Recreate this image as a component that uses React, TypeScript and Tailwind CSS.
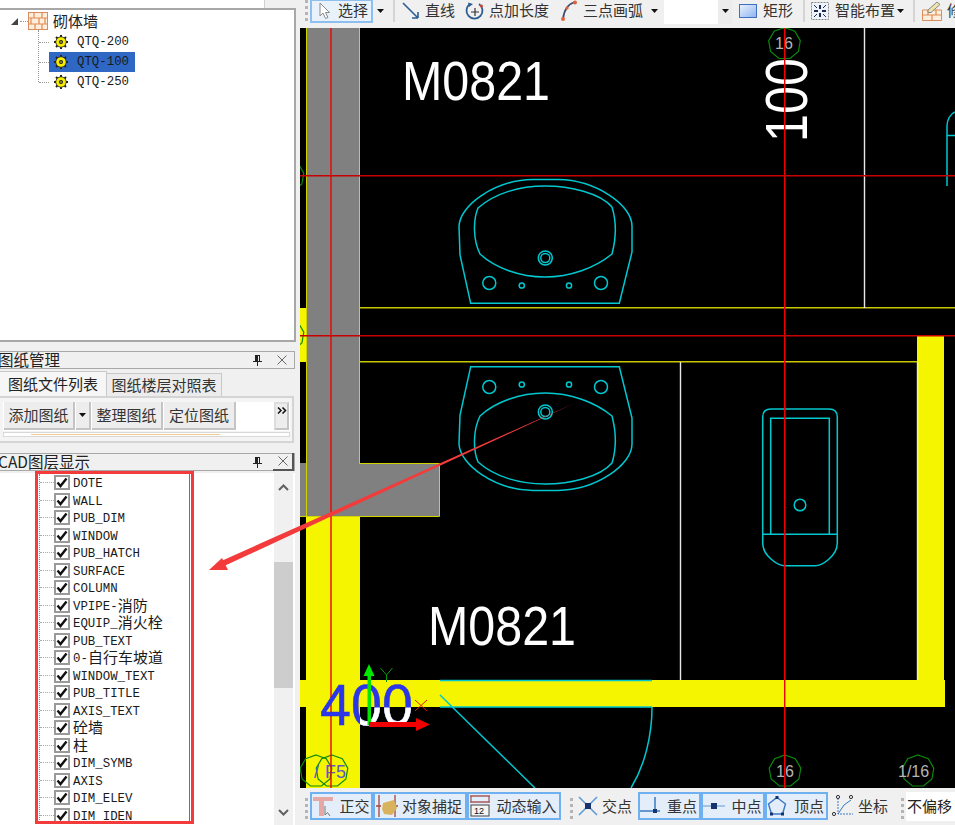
import React from "react";

const LAYERS = [
  "DOTE", "WALL", "PUB_DIM", "WINDOW", "PUB_HATCH", "SURFACE", "COLUMN", "VPIPE-消防", "EQUIP_消火栓", "PUB_TEXT",
  "0-自行车坡道", "WINDOW_TEXT", "PUB_TITLE", "AXIS_TEXT", "砼墙", "柱", "DIM_SYMB", "AXIS", "DIM_ELEV", "DIM_IDEN",
];

const Caret = ({ className = "" }: { className?: string }) => (
  <svg width="7" height="4" viewBox="0 0 7 4" className={`shrink-0 ${className}`}>
    <path d="M0 0h7L3.5 4z" fill="#111" />
  </svg>
);

const Grip = () => (
  <div className="flex w-[4px] shrink-0 flex-col gap-[3px]">
    <span className="h-[3px] w-[3px] bg-[#b5b5b5]" />
    <span className="h-[3px] w-[3px] bg-[#b5b5b5]" />
    <span className="h-[3px] w-[3px] bg-[#b5b5b5]" />
    <span className="h-[3px] w-[3px] bg-[#b5b5b5]" />
  </div>
);

const Sep = () => <div className="h-[22px] w-[2px] shrink-0 bg-[#d4d4d4]" />;

const Gear = () => (
  <svg width="14" height="14" viewBox="0 0 14 14" className="shrink-0">
    <g stroke="#222" strokeWidth="2">
      <path d="M7 0v14M0 7h14M2 2l10 10M12 2L2 12" />
    </g>
    <circle cx="7" cy="7" r="5.2" fill="#f4ec00" stroke="#222" strokeWidth="0.8" />
    <path d="M7 2.5v9M2.5 7h9M3.8 3.8l6.4 6.4M10.2 3.8l-6.4 6.4" stroke="#f4ec00" strokeWidth="1.2" />
    <circle cx="7" cy="7" r="2" fill="#222" />
    <circle cx="7" cy="7" r="0.8" fill="#f4ec00" />
  </svg>
);

const Brick = ({ size = 20 }: { size?: number }) => (
  <svg width={size} height={size} viewBox="0 0 20 18" className="shrink-0">
    <rect x="0.5" y="0.5" width="19" height="17" fill="#fdeedd" stroke="#d98c5f" />
    <path d="M0 6h20M0 12h20M6 0v6M14 0v6M3 6v6M11 6v6M17 6v6M7 12v6M14 12v6" stroke="#e08a50" strokeWidth="1.2" />
  </svg>
);

const Check = () => (
  <span className="flex h-[15px] w-[16px] shrink-0 items-center justify-center border-2 border-[#9a9a9a] bg-white">
    <svg width="12" height="11" viewBox="0 0 12 11">
      <path d="M1.5 5.5L4.5 9L10.5 1.5" fill="none" stroke="#111" strokeWidth="2.4" />
    </svg>
  </span>
);

// the 15px cjk strut keeps latin-only and mixed rows on the same baseline
const Label = ({ text }: { text: string }) => (
  <span className="block whitespace-nowrap text-[15px] leading-[17px] text-[#1a1a1a] font-['Noto_Sans_CJK_SC',sans-serif]">
    {text.split(/([\u4e00-\u9fff]+)/).map((part, i) =>
      /[\u4e00-\u9fff]/.test(part) ? (
        <span key={i} className="align-[-1px]">
          {part}
        </span>
      ) : (
        <span key={i} className="text-[12.4px] font-['Liberation_Mono',monospace]">
          {part}
        </span>
      ),
    )}
  </span>
);

const PanelHeader = ({ title, pressed }: { title: string; pressed?: boolean }) => (
  <div className="flex h-[18px] w-[295px] shrink-0 items-center border border-l-0 border-[#a8a8a8] bg-[#f0f0f0]">
    <span className="-ml-[2px] -mt-[2px] flex-1 whitespace-nowrap text-[15.5px] leading-[16px] text-[#222]">
      {title}
    </span>
    <svg width="11" height="12" viewBox="0 0 11 12" className="mr-[10px] shrink-0">
      <path d="M3 1h5v6h2v1H6v4H5V8H1V7h2zM6 2v5h1V2z" fill="#222" />
    </svg>
    <span
      className={
        pressed
          ? "flex h-[18px] w-[21px] shrink-0 items-center justify-center border-r-2 border-b-2 border-[#555]"
          : "mr-[4px] flex h-[18px] w-[17px] shrink-0 items-center justify-center"
      }
    >
      <svg width="10" height="10" viewBox="0 0 10 10">
        <path d="M0.5 0.5l9 9M9.5 0.5l-9 9" stroke="#666" />
      </svg>
    </span>
  </div>
);

const SmallBtn = ({ label, w }: { label: string; w: string }) => (
  <div className={`flex h-[28px] items-center justify-center border-r-2 border-b-2 border-[#c4c4c4] bg-[#ededed] text-[15px] text-[#333] ${w}`}>
    {label}
  </div>
);

const Sink = () => (
  <g>
    <path d="M470.7 303.3L460 255L459 226C460 205 495 180 533 179.5L558 179.5C596 180 632 205 632 226L632 252L619.3 303.3Z" />
    <path d="M478 208C495 193 520 186 545 186C570 186 600 193 612 207C616 220 617 235 612 254C595 268 570 277 545 277C520 277 495 268 480 254C473 240 473 220 478 208Z" />
    <circle cx="545.3" cy="258" r="7" />
    <circle cx="545.3" cy="258" r="4.5" />
    <circle cx="489.3" cy="283" r="6.5" />
    <circle cx="601" cy="283" r="6.5" />
    <circle cx="521.8" cy="285.5" r="2.6" />
    <circle cx="569" cy="285.5" r="2.6" />
  </g>
);

const Hept = ({ cx, cy }: { cx: number; cy: number }) => {
  const pts = Array.from({ length: 9 }, (_, i) => {
    const a = (i * 2 * Math.PI) / 9 - Math.PI / 2;
    return `${(cx + 16 * Math.cos(a)).toFixed(1)},${(cy + 16 * Math.sin(a)).toFixed(1)}`;
  }).join(" ");
  return <polygon points={pts} fill="none" stroke="#0b8a0b" strokeWidth="1.2" />;
};

const SANS = "Liberation Sans, sans-serif";

const Canvas = () => (
  <svg viewBox="300 28 655 760" className="block h-[760px] w-[655px] shrink-0 bg-black">
    <rect x="307" y="28" width="52" height="488" fill="#808080" />
    <rect x="300" y="463" width="139" height="53" fill="#808080" />
    <rect x="300" y="308" width="6" height="54" fill="#f5f500" />
    <rect x="306" y="516" width="54" height="272" fill="#f5f500" />
    <rect x="300" y="680" width="645" height="27" fill="#f5f500" />
    <rect x="917" y="336" width="27" height="370" fill="#f5f500" />

    <path d="M306.5 28V516M359.5 28V463.5H439.5V516.5H300" stroke="#d2d200" strokeWidth="1" fill="none" />
    <path d="M360 307.7H955M360 361.7H917" stroke="#c8c800" strokeWidth="1.5" fill="none" />
    <path d="M864.5 28V308M680.5 362V680M917.5 362V680" stroke="#e8e8e8" strokeWidth="1.4" />

    <g fill="none" stroke="#00c8d0" strokeWidth="1.5">
      <Sink />
      <g transform="matrix(1 0 0 -1 0 670)">
        <Sink />
      </g>
      <path d="M762.7 543V417Q762.7 409 771 409H829Q837.3 409 837.3 417V543C837.3 556 822 565.7 815 565.7H785C778 565.7 762.7 556 762.7 543Z" />
      <path d="M770.7 534V418.3H829.3V534M762.7 534.3H837.3" />
      <circle cx="800" cy="505" r="5.8" />
      <path d="M440 680.5H652M440 707H652M440 695L535 788M652 707C652 735 645 765 631 788" />
      <path d="M955 112C950 114 947 120 947 126V186M947 135.5H955" />
    </g>

    <text x="402" y="100" fontSize="56" fill="#fff" fontFamily={SANS} textLength="148" lengthAdjust="spacingAndGlyphs">
      M0821
    </text>
    <text x="428" y="645" fontSize="56" fill="#fff" fontFamily={SANS} textLength="148" lengthAdjust="spacingAndGlyphs">
      M0821
    </text>
    <text transform="translate(807 142) rotate(-90)" fontSize="60" fill="#fff" fontFamily={SANS} textLength="84" lengthAdjust="spacingAndGlyphs">
      100
    </text>

    <Hept cx={784.5} cy={43.5} />
    <Hept cx={785} cy={771} />
    <Hept cx={918} cy={771} />
    <Hept cx={316} cy={771} />
    <Hept cx={332} cy={771} />
    <Hept cx={288} cy={176} />
    <Hept cx={288} cy={335} />
    <text x="775" y="49" fontSize="16" fill="#b4b4b4" fontFamily={SANS}>16</text>
    <text x="776" y="777" fontSize="16" fill="#b4b4b4" fontFamily={SANS}>16</text>
    <text x="898" y="777" fontSize="16" fill="#b4b4b4" fontFamily={SANS}>1/16</text>
    <text x="314" y="778" fontSize="18" fill="#6058c0" fontFamily={SANS}>/</text>
    <text x="325" y="778" fontSize="18" fill="#6058c0" fontFamily={SANS}>F5</text>

    <path d="M331 28V788M784.7 28V788" stroke="#f00000" strokeWidth="1.4" />
    <path d="M300 175.8H955M300 335.7H955" stroke="#c80000" strokeWidth="1.4" />

    <text x="320" y="725" fontSize="57" fill="#2a36e8" stroke="#2a36e8" strokeWidth="0.5" fontFamily={SANS} textLength="93" lengthAdjust="spacingAndGlyphs">
      400
    </text>
    <clipPath id="below">
      <rect x="360" y="707.5" width="60" height="30" />
    </clipPath>
    <text x="320" y="725" fontSize="57" fill="#fff" stroke="#fff" strokeWidth="0.5" fontFamily={SANS} textLength="93" lengthAdjust="spacingAndGlyphs" clipPath="url(#below)">
      400
    </text>

    <path d="M367.5 725V676H363.5L369 664L374.5 676H371V725Z" fill="#00e800" />
    <path d="M369 722H416V718L430 724.5L416 731V727H369Z" fill="#f00000" />
    <path d="M380.5 668L386.5 675L392.5 668M386.5 675V682" fill="none" stroke="#0a9a0a" strokeWidth="1" />
    <path d="M415 700L427 711M427 700L415 711" fill="none" stroke="#e02000" strokeWidth="1" />
  </svg>
);

const TopBar = () => (
  <div className="flex h-[28px] shrink-0 items-center overflow-hidden bg-[#f0f0f0] pb-[7px] text-[15px] text-[#333]">
    <div className="ml-[5px] shrink-0">
      <Grip />
    </div>
    <div className="ml-px flex h-[24px] w-[63px] shrink-0 items-center gap-[6px] border-2 border-[#8dc0f0] bg-[#e9f2fb] pl-[6px]">
      <svg width="14" height="18" viewBox="0 0 14 18" className="shrink-0">
        <path d="M2 1V14L5 11L7.5 16.5L10 15.5L7.5 10.5H11.5Z" fill="#fff" stroke="#8a8a8a" />
      </svg>
      <span>选择</span>
    </div>
    <Caret className="ml-[4px] mr-[9px]" />
    <Sep />
    <svg width="20" height="20" viewBox="0 0 20 20" className="ml-[6px] mr-[4px] shrink-0">
      <path d="M2 2L17 17M17 17V11M17 17H11" fill="none" stroke="#2c5d92" strokeWidth="1.6" />
    </svg>
    <span className="w-[40px] shrink-0">直线</span>
    <svg width="20" height="20" viewBox="0 0 20 20" className="mr-[4px] shrink-0">
      <path d="M5 3A8 8 0 1 0 14 3" fill="none" stroke="#2c5d92" strokeWidth="1.8" />
      <path d="M3 1.5L8 3L4 6" fill="#2c5d92" />
      <path d="M10 7v8M6 11h8" stroke="#333" strokeWidth="1.2" />
      <circle cx="16.5" cy="5" r="1.5" fill="#d8442c" />
    </svg>
    <span className="w-[71px] shrink-0">点加长度</span>
    <svg width="18" height="22" viewBox="0 0 18 22" className="mr-[5px] shrink-0">
      <path d="M3 19C4 10 8 4 15 2" fill="none" stroke="#3f4f6b" strokeWidth="1.8" />
      <circle cx="3" cy="19" r="2" fill="#e2603c" />
      <circle cx="15" cy="2.5" r="2" fill="#e2603c" />
      <circle cx="7" cy="8" r="1.6" fill="#e2603c" />
    </svg>
    <span className="w-[68px] shrink-0">三点画弧</span>
    <Caret className="mr-[6px]" />
    <div className="h-[27px] w-[54px] shrink-0 bg-white" />
    <div className="flex h-[27px] w-[14px] shrink-0 items-center justify-center bg-[#ececec]">
      <Caret />
    </div>
    <div className="ml-[7px] mr-[6px] h-[14px] w-[18px] shrink-0 border border-[#3f6fc0] bg-gradient-to-br from-[#eaf1fd] to-[#8fb4ee]" />
    <span className="w-[40px] shrink-0">矩形</span>
    <Sep />
    <svg width="18" height="18" viewBox="0 0 18 18" className="ml-[6px] mr-[6px] shrink-0">
      <rect x="0.5" y="0.5" width="17" height="17" fill="#eef3fb" stroke="#8a8a8a" strokeDasharray="2 1" />
      <path d="M9 3v4M9 11v4M3 9h4M11 9h4" stroke="#1c2c50" strokeWidth="2" />
      <path d="M3 3l3 3M15 3l-3 3M3 15l3-3M15 15l-3-3" stroke="#1c2c50" />
    </svg>
    <span className="w-[62px] shrink-0">智能布置</span>
    <Caret className="mr-[9px]" />
    <Sep />
    <svg width="20" height="20" viewBox="0 0 20 20" className="ml-[7px] mr-[5px] shrink-0">
      <path d="M0.5 9H19.5V19.5H0.5Z" fill="#fdeedd" stroke="#d98c5f" />
      <path d="M0 14h20M6 9v5M14 9v5M10 14v6" stroke="#e08a50" strokeWidth="1.2" />
      <path d="M6 9L15 1L18 3.5L9 11.5H6Z" fill="#eee3a8" stroke="#888" />
    </svg>
    <span className="shrink-0">修</span>
  </div>
);

const Toggle = ({ w, icon, label, gap }: { w: string; icon: React.ReactNode; label: string; gap: string }) => (
  <div className={`flex h-[28px] shrink-0 items-center justify-center border-2 border-[#6fb0f0] bg-[#e4eefa] pr-[2px] text-[15px] text-[#333] ${w} ${gap}`}>
    {icon}
    <span className="whitespace-nowrap">{label}</span>
  </div>
);

const BottomBar = () => (
  <div className="flex h-[37px] shrink-0 items-start overflow-hidden bg-[#f0f0f0] pt-[4px]">
    <div className="ml-[5px] mr-px mt-[6px] shrink-0">
      <Grip />
    </div>
    <Toggle
      w="w-[63px]"
      gap="gap-[4px]"
      label="正交"
      icon={
        <svg width="24" height="22" viewBox="0 0 24 22" className="shrink-0">
          <path d="M1 2H21V6H12V21H7V6H1Z" fill="#e6a8a4" />
          <path d="M13 11V20L15.5 17.5L18 21" fill="#eee" stroke="#777" />
        </svg>
      }
    />
    <Toggle
      w="w-[94px]"
      gap="gap-[2px]"
      label="对象捕捉"
      icon={
        <svg width="24" height="24" viewBox="0 0 24 24" className="shrink-0">
          <path d="M3 1V23M19 1V23M0 12H5M16 12H22" stroke="#a8423a" strokeWidth="1.3" />
          <path d="M7 9L18 6L21 14L16 21L8 20L6 15Z" fill="#d9b25e" />
        </svg>
      }
    />
    <Toggle
      w="w-[94px]"
      gap="gap-[5px]"
      label="动态输入"
      icon={
        <svg width="22" height="24" viewBox="0 0 22 24" className="shrink-0">
          <path d="M1 2H21M1 8H21M2 2V8M20 2V8" stroke="#a85a5a" strokeWidth="1.3" fill="none" />
          <rect x="2" y="11" width="18" height="11" fill="#f4f4f4" stroke="#444" />
          <text x="5" y="20" fontSize="9" fill="#111" fontFamily={SANS}>12</text>
        </svg>
      }
    />
    <div className="ml-[9px] mr-[3px] mt-[6px] shrink-0">
      <Grip />
    </div>
    <div className="flex h-[28px] w-[61px] shrink-0 items-center gap-[4px] pl-px text-[15px] text-[#333]">
      <svg width="20" height="20" viewBox="0 0 20 20" className="shrink-0">
        <path d="M1 1L19 19M19 1L1 19" stroke="#5c9bd8" strokeWidth="1.6" />
        <rect x="7" y="7" width="6" height="6" fill="#17336e" />
      </svg>
      <span className="whitespace-nowrap">交点</span>
    </div>
    <Toggle
      w="w-[63px]"
      gap="gap-[7px]"
      label="重点"
      icon={
        <svg width="20" height="22" viewBox="0 0 20 22" className="shrink-0">
          <path d="M0 16H20" stroke="#3a78c0" strokeWidth="1.5" />
          <path d="M15 2V16" stroke="#3a78c0" strokeWidth="1.5" />
          <rect x="13" y="14" width="4" height="4" fill="#17336e" />
        </svg>
      }
    />
    <Toggle
      w="w-[64px]"
      gap="gap-[7px]"
      label="中点"
      icon={
        <svg width="22" height="10" viewBox="0 0 22 10" className="shrink-0">
          <path d="M0 5H22" stroke="#8db6e0" strokeWidth="1.5" />
          <rect x="8" y="2" width="6" height="6" fill="#17336e" />
        </svg>
      }
    />
    <Toggle
      w="w-[63px]"
      gap="gap-[7px]"
      label="顶点"
      icon={
        <svg width="20" height="20" viewBox="0 0 20 20" className="shrink-0">
          <path d="M10 1.5L18.5 8L15.5 18H4.5L1.5 8Z" fill="none" stroke="#3a78c0" strokeWidth="1.4" />
          <path d="M8.5 0h3v3h-3zM3 16.5h3v3H3zM14 16.5h3v3h-3z" fill="#17336e" />
        </svg>
      }
    />
    <div className="flex h-[28px] w-[65px] shrink-0 items-center gap-[5px] pl-[4px] text-[15px] text-[#333]">
      <svg width="21" height="24" viewBox="0 0 21 24" className="shrink-0">
        <path d="M6 4V20H21" fill="none" stroke="#3a78c0" strokeDasharray="2 1" />
        <path d="M6 20L12 11L19 6" fill="none" stroke="#3a78c0" />
        <circle cx="6" cy="3" r="1.6" fill="none" stroke="#333" />
        <circle cx="19" cy="3" r="1.6" fill="none" stroke="#333" />
        <circle cx="2" cy="20" r="1.6" fill="none" stroke="#333" />
      </svg>
      <span className="whitespace-nowrap">坐标</span>
    </div>
    <div className="ml-[8px] mr-px mt-[6px] shrink-0">
      <Grip />
    </div>
    <div className="flex h-[29px] min-w-0 flex-1 items-center overflow-hidden bg-white pl-px text-[15px] text-[#222]">
      <span className="whitespace-nowrap">不偏移</span>
    </div>
  </div>
);

const LeftPanel = () => (
  <aside className="flex h-full w-[300px] shrink-0 flex-col bg-[#f0f0f0]">
    <div className="flex h-[8px] w-[295px] shrink-0">
      <div className="w-[264px] bg-white" />
      <div className="flex-1 border-l border-[#d0d0d0] bg-[#f0f0f0]" />
    </div>
    <div className="relative h-[334px] w-[296px] shrink-0 border-t-2 border-r-2 border-b-2 border-[#a8a8a8] bg-white pt-px">
      <span className="absolute left-[38px] top-[20px] h-[52px] border-l border-dotted border-[#999]" />
      <div className="flex h-[20px] items-center">
        <svg width="9" height="9" viewBox="0 0 9 9" className="ml-[10px] shrink-0">
          <path d="M8 1V8H1Z" fill="#444" />
        </svg>
        <span className="ml-px w-[8px] border-t border-dotted border-[#999]" />
        <Brick />
        <span className="ml-[5px] text-[15px] text-[#222]">砌体墙</span>
      </div>
      <div className="mt-px">
        {["QTQ-200", "QTQ-100", "QTQ-250"].map((name, i) => (
          <div key={name} className="flex h-[20px] items-center pl-[39px]">
            <span className="w-[10px] shrink-0 border-t border-dotted border-[#999]" />
            <div className={i === 1 ? "flex h-[20px] w-[86px] items-center gap-[9px] bg-[#2f68c4] pl-[5px]" : "flex h-[20px] w-[86px] items-center gap-[9px] pl-[5px]"}>
              <Gear />
              <span className="-translate-y-[2px]">
                <Label text={name} />
              </span>
            </div>
          </div>
        ))}
      </div>
    </div>
    <div className="h-[9px] shrink-0" />
    <PanelHeader title="图纸管理" />
    <div className="flex h-[27px] w-[295px] shrink-0 items-end">
      <div className="flex h-[25px] w-[107px] items-center justify-center border-t border-r border-[#c8c8c8] bg-[#f6f6f6] text-[15px] text-[#222]">
        图纸文件列表
      </div>
      <div className="flex h-[23px] w-[115px] items-center justify-center border-t border-r border-[#c8c8c8] bg-[#ececec] text-[15px] text-[#333]">
        图纸楼层对照表
      </div>
    </div>
    <div className="flex h-[47px] w-[294px] shrink-0 flex-col border-t-2 border-r-2 border-b-2 border-[#d4d4d4] bg-[#f4f4f4] pl-[3px] pr-[2px] pt-[4px]">
      <div className="flex h-[29px] items-start gap-px bg-white pl-px pr-px">
        <SmallBtn label="添加图纸" w="w-[71px]" />
        <div className="flex h-[28px] w-[15px] items-center justify-center border-r-2 border-b-2 border-[#c4c4c4] bg-[#ededed]">
          <Caret />
        </div>
        <SmallBtn label="整理图纸" w="w-[71px]" />
        <SmallBtn label="定位图纸" w="w-[72px]" />
        <div className="ml-auto flex h-[28px] w-[15px] justify-center border-2 border-l-[#ddd] border-t-[#ddd] border-r-[#c4c4c4] border-b-[#c4c4c4] bg-[#ededed] pt-[3px]">
          <svg width="10" height="7" viewBox="0 0 10 7" className="shrink-0">
            <path d="M1 0.5L4 3.5L1 6.5M5.5 0.5L8.5 3.5L5.5 6.5" fill="none" stroke="#111" strokeWidth="1.5" />
          </svg>
        </div>
      </div>
      <div className="mt-px flex h-[5px] items-center border border-[#d8d8d8] bg-white pl-[27px]">
        <div className="h-px w-[189px] bg-[#f2cf8e]" />
      </div>
    </div>
    <div className="h-[10px] shrink-0" />
    <PanelHeader title="CAD图层显示" pressed />
    <div className="mt-[2px] flex min-h-0 w-[295px] flex-1 overflow-hidden bg-white">
      <div className="h-full w-[274px] overflow-hidden pl-[39px] pt-px">
        <div className="border-l border-dotted border-[#888]">
          {LAYERS.map((name) => (
            <div key={name} className="flex h-[17.5px] items-center">
              <span className="w-[14px] shrink-0 border-t border-dotted border-[#aaa]" />
              <Check />
              <span className="ml-[3px]">
                <Label text={name} />
              </span>
            </div>
          ))}
        </div>
      </div>
      <div className="flex h-full w-[19px] flex-col bg-[#f0f0f0]">
        <div className="flex h-[28px] items-center justify-center">
          <svg width="11" height="7" viewBox="0 0 11 7">
            <path d="M1 6L5.5 1.5L10 6" fill="none" stroke="#606060" strokeWidth="2" />
          </svg>
        </div>
        <div className="mt-[61px] h-[126px] bg-[#cdcdcd]" />
        <div className="mt-auto flex h-[25px] items-center justify-center">
          <svg width="11" height="7" viewBox="0 0 11 7">
            <path d="M1 1L5.5 5.5L10 1" fill="none" stroke="#606060" strokeWidth="2" />
          </svg>
        </div>
      </div>
    </div>
  </aside>
);

export default function App() {
  return (
    <div className="relative flex h-[825px] w-[955px] overflow-hidden bg-[#f0f0f0] font-['Noto_Sans_CJK_SC','Liberation_Sans',sans-serif]">
      <LeftPanel />
      <main className="flex h-full w-[655px] flex-col">
        <TopBar />
        <Canvas />
        <BottomBar />
      </main>

      {/* annotation the author drew over the screenshot */}
      <div className="pointer-events-none absolute left-[35px] top-[471px] h-[353px] w-[159px] border-[3px] border-[#f33b3b]" />
      <div className="pointer-events-none absolute left-[189px] top-[474px] h-[347px] w-px bg-[#f33b3b]" />
      <svg className="pointer-events-none absolute left-0 top-0" width="955" height="825" viewBox="0 0 955 825">
        <path d="M575 403L219 562L222 567Z" fill="#f33b3b" />
        <path d="M209 570L222 558L228 570Z" fill="#f33b3b" />
      </svg>
    </div>
  );
}
